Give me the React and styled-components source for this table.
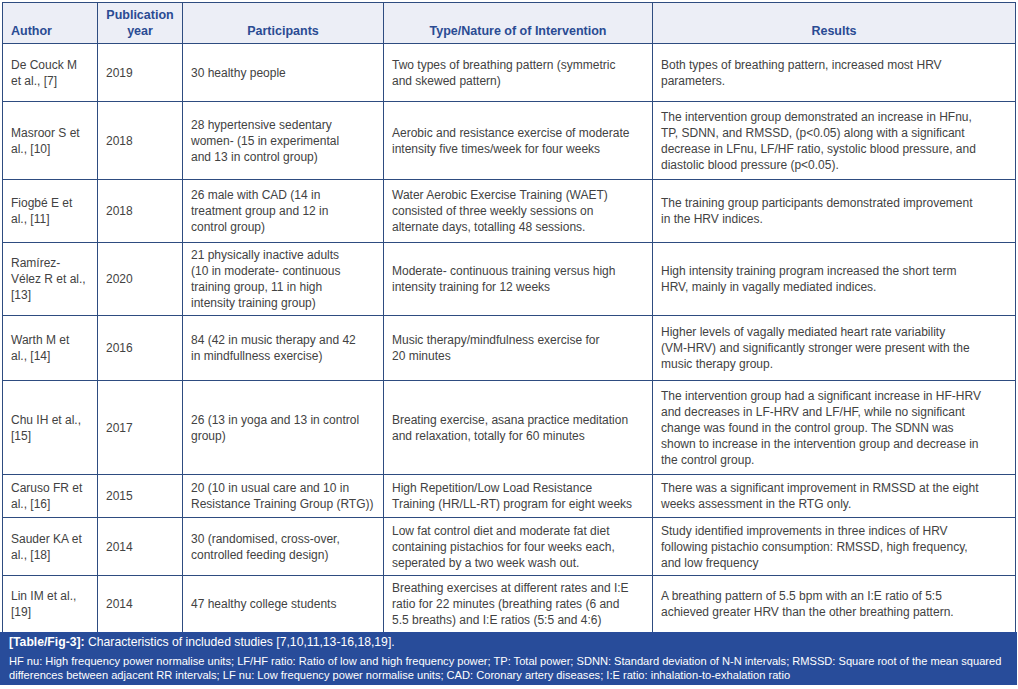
import React from "react";
import styled, { createGlobalStyle } from "styled-components";

const Global = createGlobalStyle`
  html, body { margin: 0; padding: 0; background: #ffffff; }
  body { font-family: "Liberation Sans", Arial, Helvetica, sans-serif; }
`;

const COLS = "95px 85px 201px 269px 363px";
const LINE = "#2e4c80";

const Page = styled.div`
  padding: 2px 0 0 2px;
  width: 1014px;
`;

const Table = styled.div`
  width: 1014px;
  border-top: 1px solid ${LINE};
  border-left: 1px solid ${LINE};
  box-sizing: border-box;
`;

const Row = styled.div`
  display: grid;
  grid-template-columns: ${COLS};
  height: ${(p) => p.$h}px;
  box-sizing: border-box;
  border-bottom: ${(p) => (p.$last ? "none" : `1px solid ${LINE}`)};
  background: ${(p) => (p.$head ? "#eceef6" : "#ffffff")};
`;

const Cell = styled.div`
  display: flex;
  flex-direction: column;
  justify-content: ${(p) => (p.$head ? "flex-end" : "center")};
  align-items: ${(p) => (p.$center ? "center" : "flex-start")};
  text-align: ${(p) => (p.$center ? "center" : "left")};
  border-right: 1px solid ${LINE};
  padding: ${(p) => (p.$head ? "0 8px 4px 8px" : "0 7px 0 8px")};
  box-sizing: border-box;
  font-size: ${(p) => (p.$head ? "12.5px" : "12px")};
  font-weight: ${(p) => (p.$head ? 700 : 400)};
  line-height: 16px;
  color: ${(p) => (p.$head ? "#2a4b93" : "#424242")};
  white-space: nowrap;
  overflow: hidden;
`;

const Footer = styled.div`
  margin-left: -2px;
  width: 1017px;
  height: 53px;
  box-sizing: border-box;
  background: #284c9a;
  color: #ffffff;
  padding: 2px 9px 3px 9px;
`;

const Caption = styled.div`
  font-size: 12.2px;
  line-height: 16px;
  margin-bottom: 4px;
  white-space: nowrap;
`;

const CapLabel = styled.span`
  font-weight: 700;
`;

const Note = styled.div`
  font-size: 11.1px;
  line-height: 14px;
  white-space: nowrap;
`;

const rows = [
  {
    h: 58,
    a: ["De Couck M", "et al., [7]"],
    y: "2019",
    p: ["30 healthy people"],
    i: ["Two types of breathing pattern (symmetric", "and skewed pattern)"],
    r: ["Both types of breathing pattern, increased most HRV", "parameters."],
  },
  {
    h: 78,
    a: ["Masroor S et", "al., [10]"],
    y: "2018",
    p: ["28 hypertensive sedentary", "women- (15 in experimental", "and 13 in control group)"],
    i: ["Aerobic and resistance exercise of moderate", "intensity five times/week for four weeks"],
    r: [
      "The intervention group demonstrated an increase in HFnu,",
      "TP, SDNN, and RMSSD, (p<0.05) along with a significant",
      "decrease in LFnu, LF/HF ratio, systolic blood pressure, and",
      "diastolic blood pressure (p<0.05).",
    ],
  },
  {
    h: 63,
    a: ["Fiogbé E et", "al., [11]"],
    y: "2018",
    p: ["26 male with CAD (14 in", "treatment group and 12 in", "control group)"],
    i: [
      "Water Aerobic Exercise Training (WAET)",
      "consisted of three weekly sessions on",
      "alternate days, totalling 48 sessions.",
    ],
    r: ["The training group participants demonstrated improvement", "in the HRV indices."],
  },
  {
    h: 73,
    a: ["Ramírez-", "Vélez R et al.,", "[13]"],
    y: "2020",
    p: [
      "21 physically inactive adults",
      "(10 in moderate- continuous",
      "training group, 11 in high",
      "intensity training group)",
    ],
    i: ["Moderate- continuous training versus high", "intensity training for 12 weeks"],
    r: ["High intensity training program increased the short term", "HRV, mainly in vagally mediated indices."],
  },
  {
    h: 65,
    a: ["Warth M et", "al., [14]"],
    y: "2016",
    p: ["84 (42 in music therapy and 42", "in mindfullness exercise)"],
    i: ["Music therapy/mindfulness exercise for", "20 minutes"],
    r: [
      "Higher levels of vagally mediated heart rate variability",
      "(VM-HRV) and significantly stronger were present with the",
      "music therapy group.",
    ],
  },
  {
    h: 94,
    a: ["Chu IH et al.,", "[15]"],
    y: "2017",
    p: ["26 (13 in yoga and 13 in control", "group)"],
    i: ["Breating exercise, asana practice meditation", "and relaxation, totally for 60 minutes"],
    r: [
      "The intervention group had a significant increase in HF-HRV",
      "and decreases in LF-HRV and LF/HF, while no significant",
      "change was found in the control group. The SDNN was",
      "shown to increase in the intervention group and decrease in",
      "the control group.",
    ],
  },
  {
    h: 43,
    a: ["Caruso FR et", "al., [16]"],
    y: "2015",
    p: ["20 (10 in usual care and 10 in", "Resistance Training Group (RTG))"],
    i: ["High Repetition/Low Load Resistance", "Training (HR/LL-RT) program for eight weeks"],
    r: ["There was a significant improvement in RMSSD at the eight", "weeks assessment in the RTG only."],
  },
  {
    h: 58,
    a: ["Sauder KA et", "al., [18]"],
    y: "2014",
    p: ["30 (randomised, cross-over,", "controlled feeding design)"],
    i: [
      "Low fat control diet and moderate fat diet",
      "containing pistachios for four weeks each,",
      "seperated by a two week wash out.",
    ],
    r: [
      "Study identified improvements in three indices of HRV",
      "following pistachio consumption: RMSSD, high frequency,",
      "and low frequency",
    ],
  },
  {
    h: 56,
    a: ["Lin IM et al.,", "[19]"],
    y: "2014",
    p: ["47 healthy college students"],
    i: [
      "Breathing exercises at different rates and I:E",
      "ratio for 22 minutes (breathing rates (6 and",
      "5.5 breaths) and I:E ratios (5:5 and 4:6)",
    ],
    r: [
      "A breathing pattern of 5.5 bpm with an I:E ratio of 5:5",
      "achieved greater HRV than the other breathing pattern.",
    ],
  },
];

const Lines = ({ lines }) =>
  lines.map((l, k) => <span key={k}>{l}</span>);

export default function App() {
  return (
    <Page>
      <Global />
      <Table>
        <Row $h={41} $head>
          <Cell $head>Author</Cell>
          <Cell $head $center>
            <span>Publication</span>
            <span>year</span>
          </Cell>
          <Cell $head $center>Participants</Cell>
          <Cell $head $center>Type/Nature of of Intervention</Cell>
          <Cell $head $center>Results</Cell>
        </Row>
        {rows.map((r, idx) => (
          <Row key={idx} $h={r.h} $last={idx === rows.length - 1}>
            <Cell>
              <Lines lines={r.a} />
            </Cell>
            <Cell>{r.y}</Cell>
            <Cell>
              <Lines lines={r.p} />
            </Cell>
            <Cell>
              <Lines lines={r.i} />
            </Cell>
            <Cell>
              <Lines lines={r.r} />
            </Cell>
          </Row>
        ))}
      </Table>
      <Footer>
        <Caption>
          <CapLabel>[Table/Fig-3]:</CapLabel> Characteristics of included studies [7,10,11,13-16,18,19].
        </Caption>
        <Note>
          HF nu: High frequency power normalise units; LF/HF ratio: Ratio of low and high frequency power; TP: Total power; SDNN: Standard deviation of N-N intervals; RMSSD: Square root of the mean squared
        </Note>
        <Note>
          differences between adjacent RR intervals; LF nu: Low frequency power normalise units; CAD: Coronary artery diseases; I:E ratio: inhalation-to-exhalation ratio
        </Note>
      </Footer>
    </Page>
  );
}
